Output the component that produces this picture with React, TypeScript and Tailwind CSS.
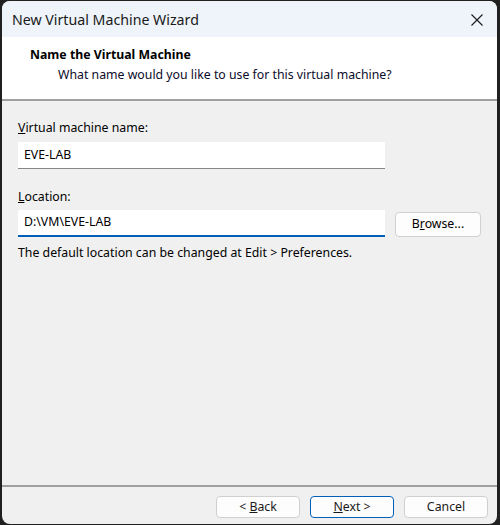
import React from "react";

const font = "font-['Noto_Sans','Open_Sans',sans-serif]";

const WizardButton = ({
  children,
  primary = false,
}: {
  children: React.ReactNode;
  primary?: boolean;
}) => (
  <button
    className={`h-[22px] w-[84px] rounded-[4px] bg-[#fdfdfd] text-[12.3px] leading-none text-[#1a1a1a] ${
      primary ? "border border-[#005fb8]" : "border border-[#d0d0d0]"
    }`}
  >
    {children}
  </button>
);

const App = () => {
  return (
    <div className={`w-[500px] h-[525px] bg-[#202020] pt-[1px] pl-[2px] ${font}`}>
      <div className="w-[495px] h-[523px] rounded-lg overflow-hidden bg-[#f0f0f0] flex flex-col">
        {/* Title bar */}
        <div className="h-[36px] shrink-0 bg-[#eef4f9] flex items-center justify-between pl-[10px] pr-[14px]">
          <span className="text-[14.2px] text-[#1a1a1a] mt-[2px]">New Virtual Machine Wizard</span>
          <svg width="12" height="12" viewBox="0 0 12 12" className="mt-[1px]">
            <path d="M0.5 0.5 L11.5 11.5 M11.5 0.5 L0.5 11.5" stroke="#1a1a1a" strokeWidth="1.1" />
          </svg>
        </div>

        {/* Header */}
        <div className="h-[64px] shrink-0 bg-white border-b-2 border-[#a0a0a0] pl-[28px] pt-[9px]">
          <div className="text-[12.3px] font-bold text-black leading-[18px]">Name the Virtual Machine</div>
          <div className="text-[12.3px] text-[#0c0c2a] leading-[18px] pl-[28px] mt-[2px]">
            What name would you like to use for this virtual machine?
          </div>
        </div>

        {/* Body */}
        <div className="flex-1 flex flex-col px-[16px] pt-[18px] text-[12.3px] text-black">
          <label className="leading-[18px]">
            <span className="underline">V</span>irtual machine name:
          </label>
          <div className="mt-[5px] w-[367px] h-[27px] bg-white border-b border-[#868686] flex items-center px-[6px]">
            EVE-LAB
          </div>

          <label className="mt-[19px] leading-[18px]">
            <span className="underline">L</span>ocation:
          </label>
          <div className="mt-[4px] flex items-end gap-[10px]">
            <div className="w-[367px] h-[27px] bg-white border-b-2 border-[#005fb8] flex items-center px-[6px]">
              D:\VM\EVE-LAB
            </div>
            <button className="h-[25px] w-[86px] rounded-[4px] bg-[#fdfdfd] border border-[#d0d0d0] text-[12.3px]">
              B<span className="underline">r</span>owse...
            </button>
          </div>
          <div className="mt-[7px] leading-[18px]">
            The default location can be changed at Edit &gt; Preferences.
          </div>
        </div>

        {/* Footer */}
        <div className="h-[39px] shrink-0 border-t-2 border-[#a0a0a0] flex items-start justify-end gap-[10px] pr-[9px] pt-[9px]">
          <WizardButton>
            &lt; <span className="underline">B</span>ack
          </WizardButton>
          <WizardButton primary>
            <span className="underline">N</span>ext &gt;
          </WizardButton>
          <WizardButton>Cancel</WizardButton>
        </div>
      </div>
    </div>
  );
};

export default App;
